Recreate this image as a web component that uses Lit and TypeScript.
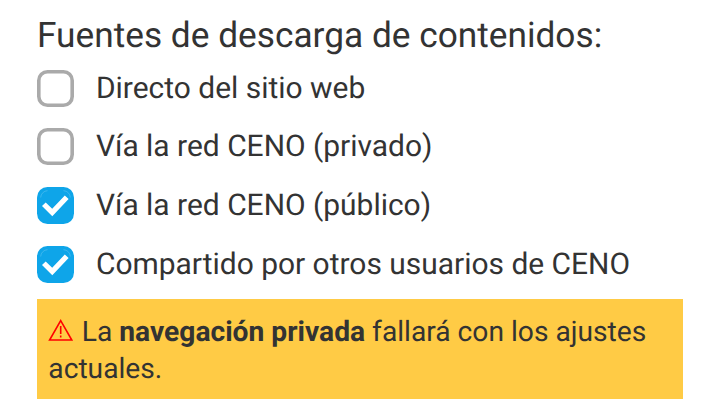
import { LitElement, html, css } from "lit";
import { customElement, state } from "lit/decorators.js";

interface Source {
  label: string;
  checked: boolean;
}

@customElement("app-root")
export class AppRoot extends LitElement {
  static styles = css`
    :host {
      display: block;
      box-sizing: border-box;
      height: 419px;
      padding: 12px 37px 0;
      overflow: hidden;
      background: #fff;
      color: #333;
      font-family: Roboto, sans-serif;
      text-rendering: geometricPrecision;
    }
    h1 {
      margin: 0;
      font-size: 35.25px;
      font-weight: 400;
      line-height: 46px;
      white-space: nowrap;
    }
    .list {
      display: flex;
      flex-direction: column;
      padding-top: 1px;
    }
    .row {
      display: flex;
      align-items: center;
      gap: 22.1px;
      height: 58.67px;
      font-size: 29.94px;
      line-height: 36px;
      white-space: nowrap;
    }
    .label {
      padding-top: 1px;
    }
    .box {
      display: block;
      width: 37px;
      height: 37px;
      margin-left: -0.2px;
      flex: none;
    }
    .warning {
      margin-top: 5.2px;
      box-sizing: border-box;
      height: 100px;
      padding: 14px 11.3px;
      background: #ffcb45;
      font-size: 28.2px;
      line-height: 37px;
    }
    .sign {
      width: 25px;
      height: 22px;
      margin-right: 1.5px;
    }
  `;

  @state() private sources: Source[] = [
    { label: "Directo del sitio web", checked: false },
    { label: "Vía la red CENO (privado)", checked: false },
    { label: "Vía la red CENO (público)", checked: true },
    { label: "Compartido por otros usuarios de CENO", checked: true },
  ];

  render() {
    return html`
      <h1>Fuentes de descarga de contenidos:</h1>
      <div class="list">
        ${this.sources.map(
          (s) => html`<div class="row">
            ${s.checked
              ? html`<svg class="box" viewBox="0 0 37 37">
                  <rect width="37" height="37" rx="10.5" fill="#0ea5e9" />
                  <path d="M5 19L8.7 15.4L15.2 21.8L27.8 8.4L31.6 12L15.3 29.2Z" fill="#fff" />
                  <path d="M3.7 10.5A7 7 0 0 1 10.5 3.7M26.5 3.7A7 7 0 0 1 33.3 10.5" fill="none" stroke="#fff" stroke-opacity=".3" stroke-width=".6" />
                </svg>`
              : html`<svg class="box" viewBox="0 0 37 37">
                  <rect x="1.8" y="1.8" width="33.4" height="33.4" rx="8.7" fill="#fff" stroke="#aaa" stroke-width="3.6" />
                </svg>`}
            <span class="label">${s.label}</span>
          </div>`
        )}
      </div>
      <div class="warning">
        <svg class="sign" viewBox="0 0 25 22">
          <path d="M12.7 1.6L23.8 21H1.6Z" fill="none" stroke="#f00" stroke-width="1.6" />
          <path d="M12.7 7v8M12.7 16.6v2" fill="none" stroke="#f00" stroke-width="1.6" />
        </svg>
        La <b>navegación privada</b> <span>fallará con los ajustes</span> <span>actuales.</span>
      </div>
    `;
  }
}
